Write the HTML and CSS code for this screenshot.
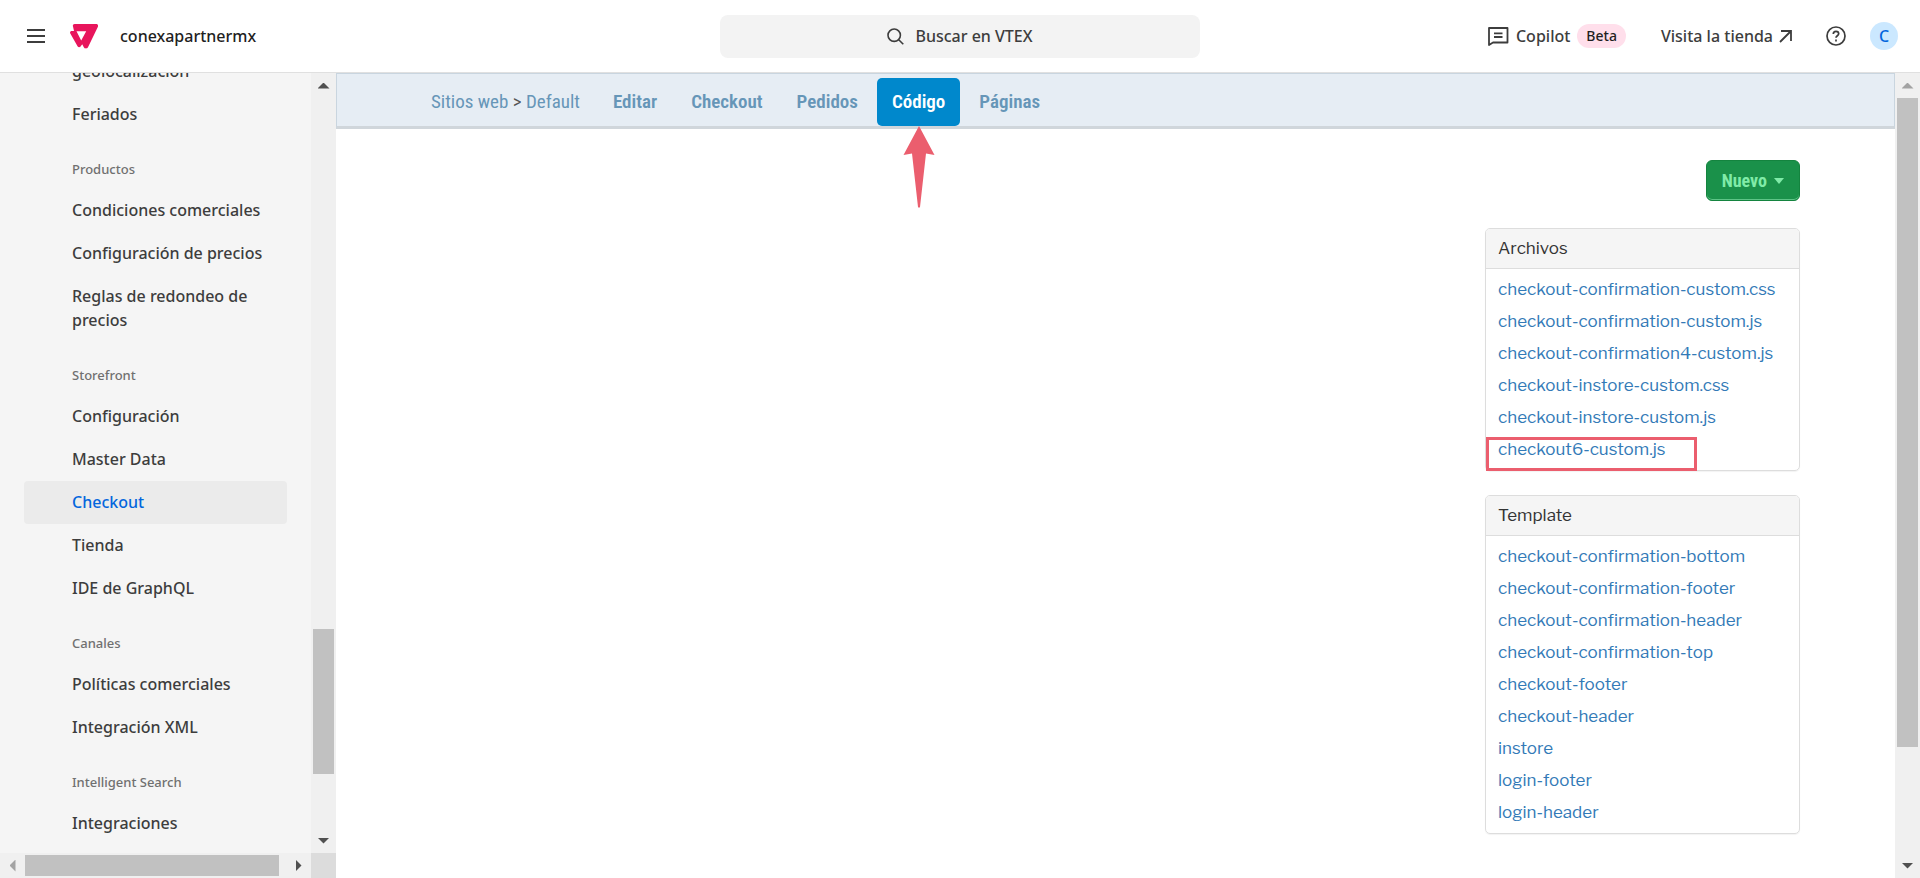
FILE: index.html
```html
<!DOCTYPE html>
<html lang="es">
<head>
    <meta charset="UTF-8">
    <meta name="viewport" content="width=device-width, initial-scale=1.0">
    <title>Checkout - VTEX</title>
    <link rel="stylesheet" href="styles.css">
</head>
<body>
    <header class="topbar">
        <div class="topbar-left">
            <button class="icon-button" aria-label="Menú">
                <svg width="18" height="16" viewBox="0 0 18 16" stroke="#3d3d3d" stroke-width="2"><path d="M0 2h18M0 8h18M0 14h18"/></svg>
            </button>
            <svg class="logo" width="28" height="25" viewBox="0 0 28 25">
                <path fill="#e8155c" fill-rule="evenodd" d="M4.6 0H26c1.7 0 2.600 1.500 1.800 3L18 23.200c-.9 1.600-3.300 1.600-4.200 0l-1.600-3-1.600 2.200c-.8 1.100-2.200 1.100-2.900 0L.3 9.500C-.4 8.200.4 7 1.800 7H4L3 2.600C2.500 1.200 3.300 0 4.600 0zM6.500 7.300l4.700 9.200 5-9.200z"/>
            </svg>
            <span class="account">conexapartnermx</span>
        </div>
        <button class="search">
            <svg width="17" height="17" viewBox="0 0 17 17" fill="none" stroke="#3d3d3d" stroke-width="1.600"><circle cx="7.200" cy="7.200" r="6.200"/><path d="M11.700 11.700l4.600 4.600"/></svg>
            <span>Buscar en VTEX</span>
        </button>
        <div class="topbar-right">
            <a href="#" class="copilot">
                <svg width="21" height="19" viewBox="0 0 21 19" fill="none" stroke="#3d3d3d" stroke-width="1.800"><path d="M1 1h18.500v14.500H5L1 18z" stroke-linejoin="round"/><path d="M6 6.300h8.500M6 10h8.500"/></svg>
                <span>Copilot</span>
                <span class="beta">Beta</span>
            </a>
            <a href="#" class="store-link">
                <span>Visita la tienda</span>
                <svg width="13" height="13" viewBox="0 0 13 13" fill="none" stroke="#3d3d3d" stroke-width="1.800"><path d="M1 12L12 1M2 1h10v10"/></svg>
            </a>
            <button class="icon-button" aria-label="Ayuda">
                <svg width="20" height="20" viewBox="0 0 20 20" fill="none" stroke="#3d3d3d" stroke-width="1.700"><circle cx="10" cy="10" r="9"/><path d="M7.300 8c0-3.700 5.400-3.500 5.400-.2 0 1.900-2.700 2-2.700 4"/><path d="M10 13.500v2"/></svg>
            </button>
            <button class="avatar">C</button>
        </div>
    </header>

    <div class="layout">
        <aside class="sidebar">
            <nav class="side-nav">
                <a href="#">geolocalización</a>
                <a href="#">Feriados</a>
                <h3>Productos</h3>
                <a href="#">Condiciones comerciales</a>
                <a href="#">Configuración de precios</a>
                <a href="#">Reglas de redondeo de precios</a>
                <h3>Storefront</h3>
                <a href="#">Configuración</a>
                <a href="#">Master Data</a>
                <a href="#" class="active">Checkout</a>
                <a href="#">Tienda</a>
                <a href="#">IDE de GraphQL</a>
                <h3>Canales</h3>
                <a href="#">Políticas comerciales</a>
                <a href="#">Integración XML</a>
                <h3>Intelligent Search</h3>
                <a href="#">Integraciones</a>
            </nav>
            <div class="scrollbar scroll-side">
                <span class="arrow up"></span>
                <span class="gap-before"></span><span class="thumb"></span><span class="gap-after"></span>
                <span class="arrow down"></span>
            </div>
            <div class="scrollbar horizontal scroll-bottom">
                <span class="arrow left disabled"></span>
                <span class="thumb"></span>
                <span class="arrow right"></span>
            </div>
            <div class="scroll-corner"></div>
        </aside>

        <main class="content">
            <nav class="tabs">
                <div class="breadcrumb">
                    <a href="#">Sitios web</a> <span>&gt;</span> <a href="#">Default</a>
                </div>
                <a href="#" class="tab">Editar</a>
                <a href="#" class="tab">Checkout</a>
                <a href="#" class="tab">Pedidos</a>
                <a href="#" class="tab active">Código
                    <svg class="pointer" width="32" height="82" viewBox="0 0 32 82"><path fill="#eb5e6e" d="M16 0l15.500 29-8.500-1.500L17 81q-1 1.500-2 0L9 27.500.5 29z"/></svg>
                </a>
                <a href="#" class="tab">Páginas</a>
            </nav>
            <div class="files">
                <button class="new-button">Nuevo <span class="caret"></span></button>
                <section class="panel">
                    <h2>Archivos</h2>
                    <ul>
                        <li><a href="#">checkout-confirmation-custom.css</a></li>
                        <li><a href="#">checkout-confirmation-custom.js</a></li>
                        <li><a href="#">checkout-confirmation4-custom.js</a></li>
                        <li><a href="#">checkout-instore-custom.css</a></li>
                        <li><a href="#">checkout-instore-custom.js</a></li>
                        <li class="marked"><a href="#">checkout6-custom.js</a></li>
                    </ul>
                </section>
                <section class="panel">
                    <h2>Template</h2>
                    <ul>
                        <li><a href="#">checkout-confirmation-bottom</a></li>
                        <li><a href="#">checkout-confirmation-footer</a></li>
                        <li><a href="#">checkout-confirmation-header</a></li>
                        <li><a href="#">checkout-confirmation-top</a></li>
                        <li><a href="#">checkout-footer</a></li>
                        <li><a href="#">checkout-header</a></li>
                        <li><a href="#">instore</a></li>
                        <li><a href="#">login-footer</a></li>
                        <li><a href="#">login-header</a></li>
                    </ul>
                </section>
            </div>
        </main>

        <div class="scrollbar scroll-main">
            <span class="arrow up disabled"></span>
            <span class="thumb"></span><span class="gap-after"></span>
            <span class="arrow down"></span>
        </div>
    </div>
</body>
</html>
```

FILE: styles.css
```css
* {
    box-sizing: border-box;
}

body {
    margin: 0;
    height: 100vh;
    display: flex;
    flex-direction: column;
    overflow: hidden;
    font-family: "Noto Sans", "Open Sans", sans-serif;
    font-size: 16px;
    color: #3d3d3d;
    background: #fff;
}

a {
    color: inherit;
    text-decoration: none;
}

button {
    font: inherit;
    color: inherit;
    border: none;
    background: none;
    padding: 0;
    cursor: pointer;
}

svg {
    display: block;
    flex: none;
}

/* top bar */
.topbar {
    display: grid;
    grid-template-columns: 1fr 480px 1fr;
    align-items: center;
    flex: none;
    height: 73px;
    padding: 0 22px;
    border-bottom: 1px solid #e0e0e0;
    font-weight: 500;
}

.topbar-left, .topbar-right, .copilot, .store-link {
    display: flex;
    align-items: center;
}

.topbar-left {
    padding-left: 5px;
}

.logo {
    margin: 0 22px 0 25px;
}

.account {
    color: #1f1f1f;
}

.search {
    display: flex;
    align-items: center;
    justify-content: center;
    gap: 11px;
    height: 43px;
    border-radius: 8px;
    background: #f3f3f3;
    font-weight: 500;
}

.topbar-right {
    justify-content: flex-end;
}

.copilot {
    gap: 7px;
    margin-right: 35px;
}

.beta {
    padding: 0 9px;
    line-height: 24px;
    border-radius: 12px;
    background: #ffdfeb;
    color: #1f1f1f;
    font-size: 14px;
}

.store-link {
    gap: 6px;
    margin-right: 34px;
}

.avatar {
    width: 28px;
    height: 28px;
    margin-left: 24px;
    border-radius: 50%;
    background: #cbe8ff;
    color: #0366dd;
    font-weight: 500;
}

.layout {
    display: flex;
    flex: 1;
    min-height: 0;
}

/* sidebar */
.sidebar {
    display: grid;
    grid-template-columns: 1fr 25px;
    grid-template-rows: minmax(0, 1fr) 25px;
    flex: none;
    width: 336px;
    background: #f5f5f5;
}

.side-nav {
    display: flex;
    flex-direction: column;
    justify-content: flex-end;
    padding: 0 24px 8px;
    overflow: hidden;
}

.side-nav a {
    flex: none;
    padding: 9px 16px 10px 48px;
    line-height: 24px;
    border-radius: 4px;
    font-weight: 500;
}

.side-nav a.active {
    background: #ebebeb;
    color: #0366dd;
}

.side-nav h3 {
    flex: none;
    margin: 0;
    padding: 24px 48px 11px;
    line-height: 18px;
    font-size: 13px;
    font-weight: 500;
    color: #707070;
}

/* scrollbars */
.scrollbar {
    display: flex;
    flex-direction: column;
    align-items: center;
    width: 25px;
    flex: none;
    background: #f0f0f0;
}

.scrollbar.horizontal {
    flex-direction: row;
    width: auto;
    height: 25px;
}

.scrollbar .thumb {
    width: 21px;
    background: #c1c1c1;
}

.scrollbar.horizontal .thumb {
    flex: 1;
    height: 21px;
    margin-right: 7px;
}

.scroll-side .gap-before { flex: 531; }
.scroll-side .thumb { flex: 145; }
.scroll-side .gap-after { flex: 54; }
.scroll-main .thumb { flex: 649; }
.scroll-main .gap-after { flex: 106; }

.arrow {
    display: flex;
    align-items: center;
    justify-content: center;
    flex: none;
    width: 25px;
    height: 25px;
    color: #505050;
}

.arrow.disabled {
    color: #a3a3a3;
}

.arrow::before {
    content: "";
    width: 12px;
    height: 6px;
    background: currentColor;
    clip-path: polygon(50% 0, 100% 100%, 0 100%);
}

.arrow.down::before {
    clip-path: polygon(0 0, 100% 0, 50% 100%);
}

.arrow.left::before, .arrow.right::before {
    width: 6px;
    height: 12px;
    clip-path: polygon(0 50%, 100% 0, 100% 100%);
}

.arrow.right::before {
    clip-path: polygon(0 0, 100% 50%, 0 100%);
}

.scroll-corner {
    background: #dcdcdc;
}

/* content */
.content {
    flex: 1;
    min-width: 0;
    font-family: "Libre Franklin", "Open Sans", sans-serif;
}

.tabs {
    display: flex;
    align-items: flex-end;
    height: 56px;
    padding: 0 94px;
    border: 1px solid #c9d5df;
    border-bottom: 3px solid #d0d6db;
    background: #e6edf4;
    color: #6696b8;
    font-family: "Roboto Condensed", Roboto, sans-serif;
    font-size: 19px;
    line-height: 48px;
}

.breadcrumb {
    margin-right: 18px;
}

.breadcrumb span {
    color: #555;
}

.tab {
    position: relative;
    padding: 0 15px;
    margin-right: 4px;
    border-radius: 5px;
    font-weight: 600;
}

.tab.active {
    background: #0088cc;
    color: #fff;
}

.pointer {
    position: absolute;
    top: 48px;
    left: 50%;
    margin-left: -16px;
}

.files {
    display: flex;
    flex-direction: column;
    align-items: flex-end;
    padding: 31px 95px 0;
}

.new-button {
    display: flex;
    align-items: center;
    gap: 7px;
    height: 41px;
    margin-bottom: 27px;
    padding: 0 15px;
    border: 1px solid #14843f;
    border-radius: 6px;
    background: #1a914a;
    box-shadow: inset 0 -1px #5ec487;
    color: #80eba8;
    font-family: "Roboto Condensed", Roboto, sans-serif;
    font-size: 18px;
    font-weight: bold;
}

.caret {
    border: 5px solid transparent;
    border-top: 6px solid #80eba8;
    border-bottom: none;
}

.panel {
    width: 315px;
    margin-bottom: 24px;
    border: 1px solid #ddd;
    border-radius: 5px;
    box-shadow: 0 1px 1px rgba(0, 0, 0, 0.05);
}

.panel h2 {
    margin: 0;
    padding: 0 12px;
    line-height: 39px;
    border-bottom: 1px solid #ddd;
    border-radius: 4px 4px 0 0;
    background: #f5f5f5;
    font-size: 17px;
    font-weight: normal;
    color: #333;
}

.panel ul {
    margin: 0;
    padding: 4px 12px 5px;
    list-style: none;
    font-size: 17px;
    line-height: 32px;
    color: #337ab7;
}

.marked {
    position: relative;
}

.marked::before {
    content: "";
    position: absolute;
    top: 4px;
    left: -12px;
    width: 205px;
    height: 28px;
    border: 3px solid #eb5e6e;
    pointer-events: none;
}
```
